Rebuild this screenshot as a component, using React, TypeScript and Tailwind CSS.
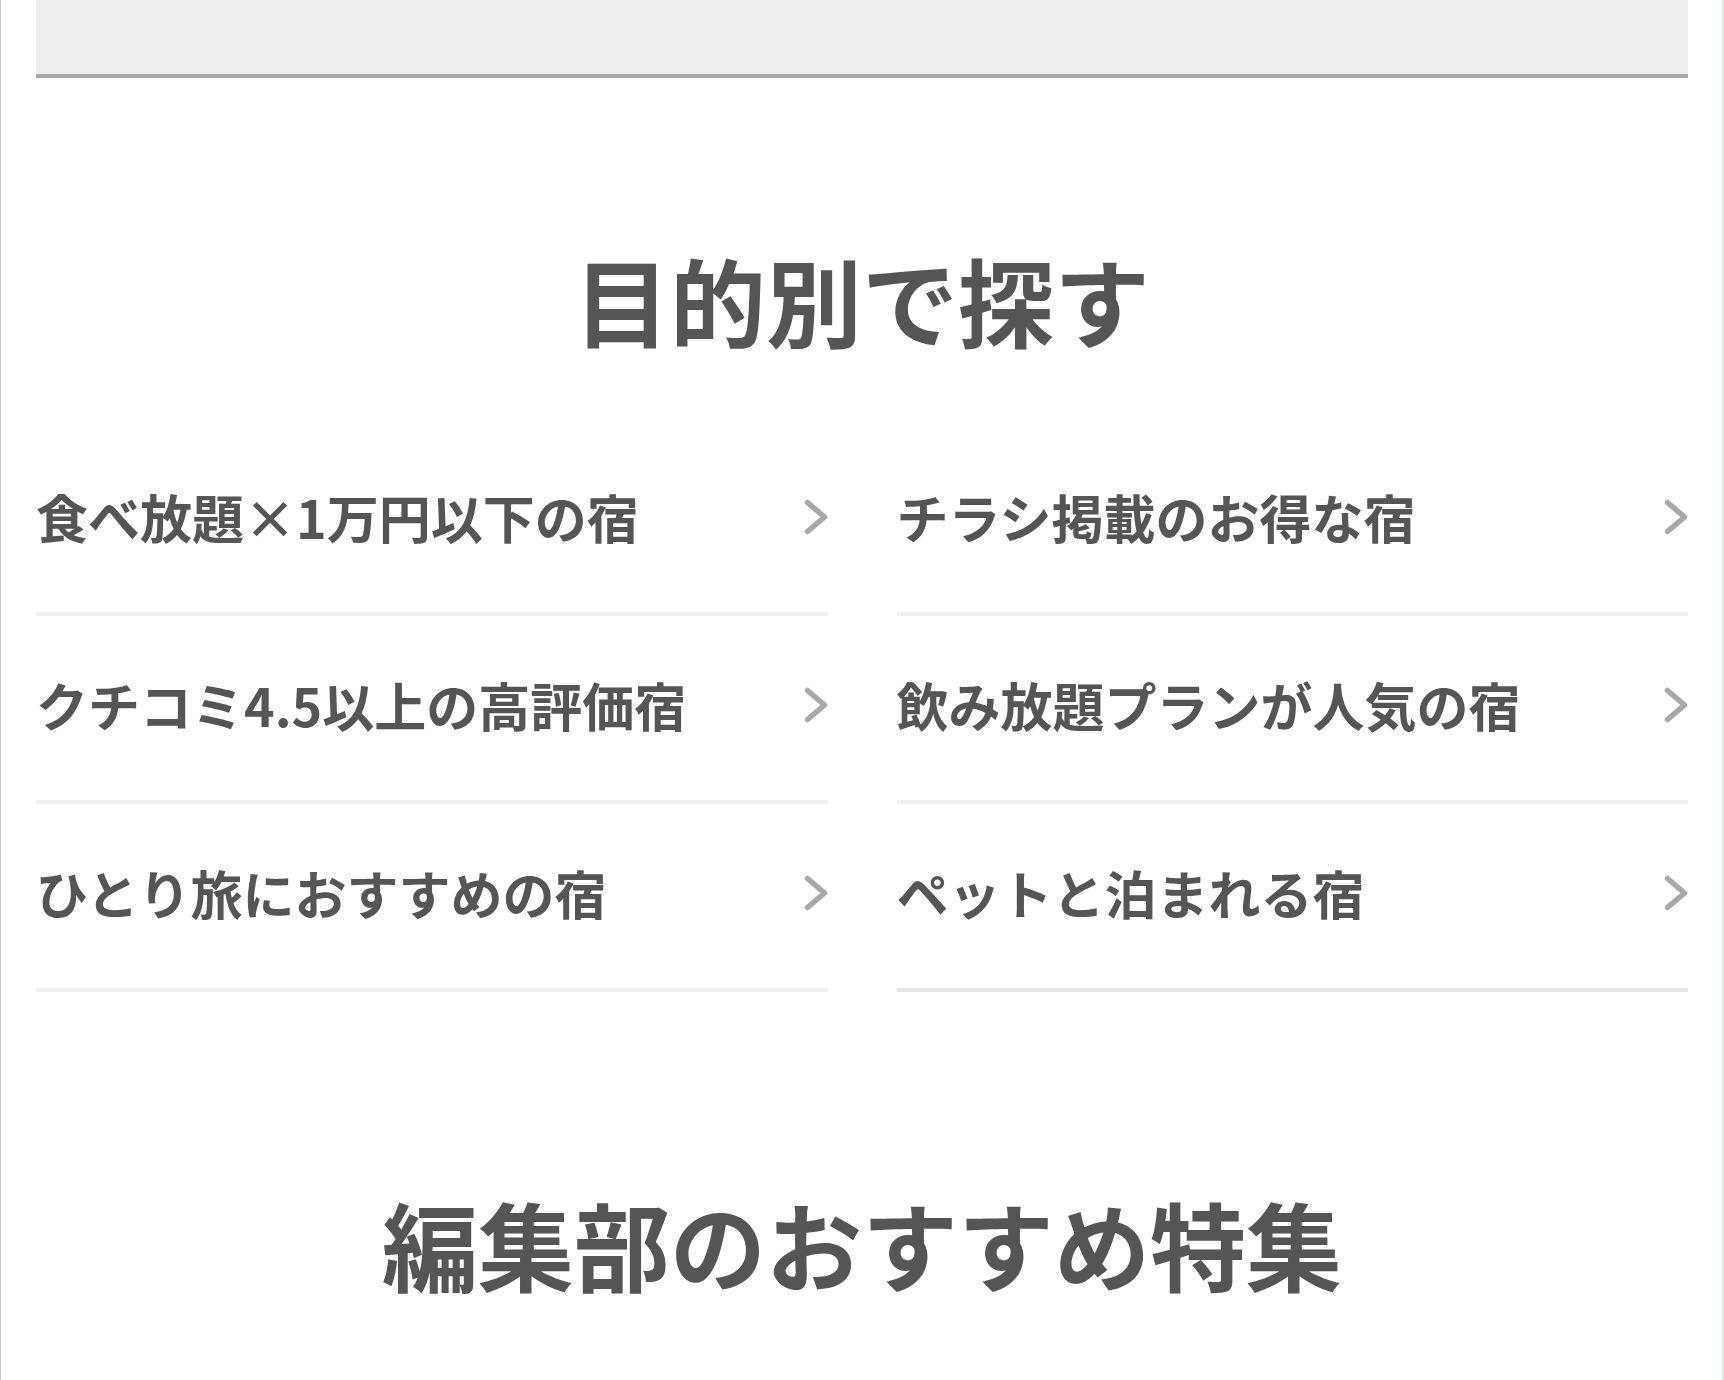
const purposes = [
  "食べ放題×1万円以下の宿",
  "チラシ掲載のお得な宿",
  "クチコミ4.5以上の高評価宿",
  "飲み放題プランが人気の宿",
  "ひとり旅におすすめの宿",
  "ペットと泊まれる宿",
];

function Chevron() {
  return (
    <svg width="24" height="36" viewBox="0 0 24 36" className="shrink-0">
      <path
        d="M3.5 3.5 L20.5 18 L3.5 32.5"
        fill="none"
        stroke="#a8a8a8"
        strokeWidth="5.5"
        strokeLinecap="round"
        strokeLinejoin="round"
      />
    </svg>
  );
}

function App() {
  return (
    <div
      className="min-h-screen w-full bg-white border-l border-l-[#cccccc] border-r-2 border-r-[#e6eaef] pl-[35px] pr-[34px] text-[#555555]"
      style={{ fontFamily: '"Noto Sans CJK JP", "Noto Sans", sans-serif' }}
    >
      {/* top search box remnant */}
      <div className="h-[78px] bg-[#efefef] border-b-4 border-[#aaaaaa]" />

      <section className="pt-[173px]">
        <h2 className="text-center text-[96px] leading-none font-bold">目的別で探す</h2>
        <div className="grid grid-cols-2 gap-x-[69px] mt-[81px]">
          {purposes.map((label, i) => (
            <a
              key={i}
              href="#"
              className={
                "flex items-center justify-between pt-[63px] pb-[69px] border-b-4 " +
                (i === purposes.length - 1 ? "border-[#e6e6e6]" : "border-[#f0f0f0]")
              }
            >
              <span className="text-[52px] leading-[52px] font-bold whitespace-nowrap">{label}</span>
              <Chevron />
            </a>
          ))}
        </div>
      </section>

      <section className="pt-[203px]">
        <h2 className="text-center text-[96px] leading-none font-bold">編集部のおすすめ特集</h2>
      </section>
    </div>
  );
}

export default App;
